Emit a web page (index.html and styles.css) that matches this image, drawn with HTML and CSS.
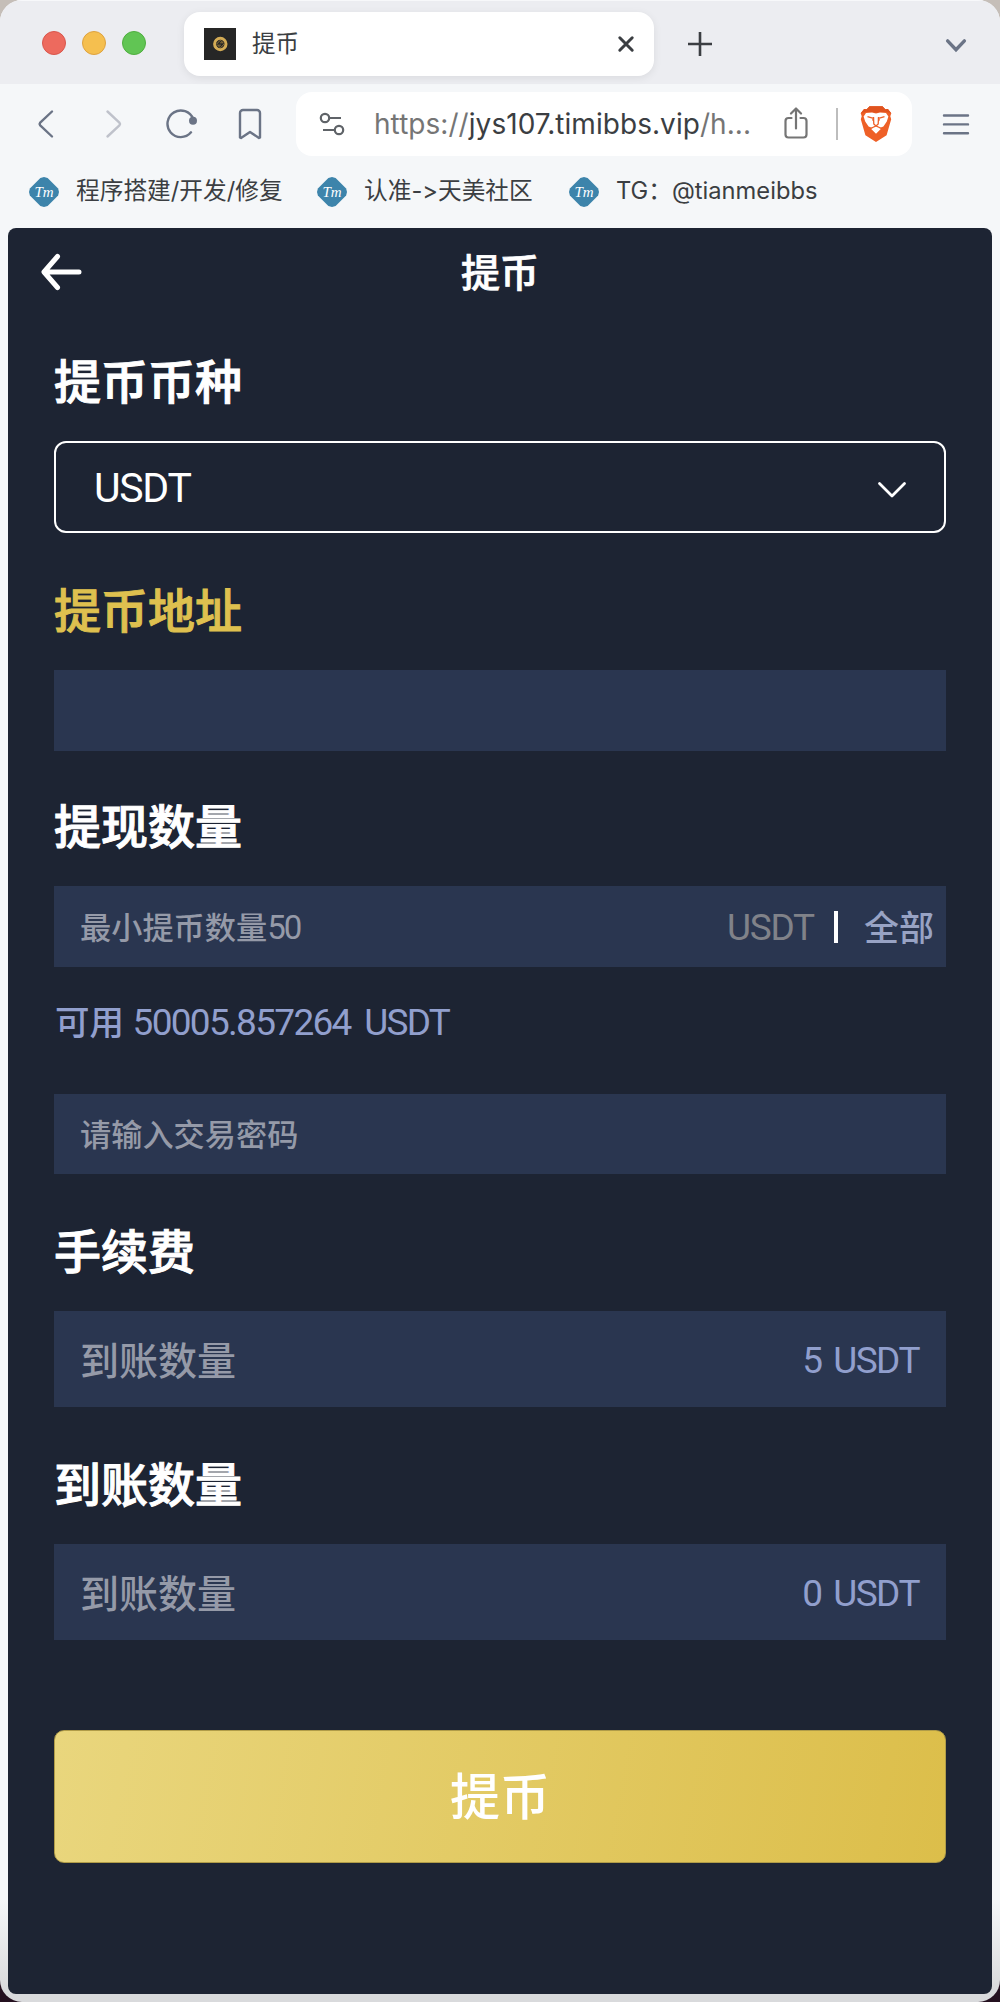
FILE: index.html
```html
<!doctype html>
<html lang="zh-CN">
<head>
<meta charset="utf-8">
<meta name="viewport" content="width=device-width, initial-scale=1">
<title>提币</title>
<link rel="stylesheet" href="styles.css">
</head>

<body>
<div class="window">
  <div class="tabstrip">
    <div class="lights">
      <span class="light red"></span>
      <span class="light yellow"></span>
      <span class="light green"></span>
    </div>
    <div class="tab">
      <svg class="favicon" width="32" height="32" viewBox="0 0 32 32">
        <rect width="32" height="32" fill="#262626"/>
        <circle cx="16.3" cy="16" r="5.7" fill="none" stroke="#d3ab55" stroke-width="3"/>
        <path d="M12.5 16.2l3.800-4 3 2.600h-3.200M20.300 15.800l-3.800 4-3-2.600h3.400" fill="none" stroke="#8a7038" stroke-width="1"/>
      </svg>
      <span class="tab-title">提币</span>
      <svg width="20" height="20" viewBox="0 0 20 20" fill="none" stroke="#3b3e42" stroke-width="3" stroke-linecap="round"><path d="M3.8 3.8l12.4 12.4M16.2 3.8L3.8 16.2"/></svg>
    </div>
    <svg class="new-tab" width="24" height="24" viewBox="0 0 24 24" fill="none" stroke="#3b3e42" stroke-width="2.6"><path d="M12 0v24M0 12h24"/></svg>
    <svg class="tab-menu" width="24" height="24" viewBox="0 0 24 24" fill="none" stroke="#6b7486" stroke-width="3.4" stroke-linecap="round"><path d="M3.6 7.900l8.4 8.8 8.4-8.8"/></svg>
  </div>

  <div class="toolbar">
    <div class="tool"><svg width="32" height="32" viewBox="0 0 32 32" fill="none" stroke="#6b7486" stroke-width="2.4" stroke-linecap="round" stroke-linejoin="round"><path d="M22 3.500L10.200 14.600q-1.200 1.400 0 2.8L22 28.500"/></svg></div>
    <div class="tool"><svg width="32" height="32" viewBox="0 0 32 32" fill="none" stroke="#bfc2cb" stroke-width="2.4" stroke-linecap="round" stroke-linejoin="round"><path d="M9.5 3.500l11.900 11.100q1.200 1.400 0 2.8L9.5 28.500"/></svg></div>
    <div class="tool"><svg width="32" height="32" viewBox="0 0 32 32" fill="none" stroke="#6b7486" stroke-width="2.4" stroke-linecap="round"><path d="M27.200 11A13.300 13.300 0 1 0 25 24.300"/><circle cx="27" cy="12.700" r="4" fill="#6b7486" stroke="none"/></svg></div>
    <div class="tool"><svg width="32" height="32" viewBox="0 0 32 32" fill="none" stroke="#6b7486" stroke-width="2.4" stroke-linejoin="round"><path d="M6 5a3 3 0 0 1 3-3h14a3 3 0 0 1 3 3v24.5L25 30l-9-6-9 6-1-.5z"/></svg></div>
    <div class="urlbar">
      <svg width="26" height="24" viewBox="0 0 26 24" fill="none" stroke="#5f6368" stroke-width="2.2"><circle cx="6" cy="6" r="4.2"/><path d="M10.2 6H22M4 18h11.600"/><circle cx="20" cy="18" r="4.200"/></svg>
      <span class="url">https://<b>jys107.timibbs.vip</b>/h...</span>
      <svg class="share" width="24" height="32" viewBox="0 0 24 32" fill="none" stroke="#757575" stroke-width="2.2" stroke-linecap="round" stroke-linejoin="round"><path d="M7.500 11H4.500a3 3 0 0 0-3 3v13.500a3 3 0 0 0 3 3h15a3 3 0 0 0 3-3V14a3 3 0 0 0-3-3h-3M12 21.500V2M7 6.500l5-5 5 5"/></svg>
      <span class="divider"></span>
      <svg class="shield" width="32" height="36" viewBox="0 0 32 36">
        <path d="M9.500.2h13l2.800 3 2.600-.2 3.400 4.300-1 3 .9 3-4.600 16L16 36 5.400 29.300.8 13.300l.9-3-1-3L4.100 3l2.600.2z" fill="#ee6027"/>
        <path d="M9.500.2h13l2.800 3 2.600-.2 3.400 4.300-5.500-1.600-5.200.8H11.400l-5.200-.8-5.500 1.600L4.100 3l2.600.2z" fill="#e0531f"/>
        <path d="M6 7l6-.6 4 1 4-1 6 .6 2.400 3.600-1.600 5-3.400 4.800-3.200 1.300L16 24l-4.200-2.300-3.200-1.300-3.400-4.800-1.600-5zM11 22.800l5-2.200 5 2.200-5 5z" fill="#fff"/>
        <path d="M7.500 10.700l6 1.700-1 2.200M24.500 10.700l-6 1.700 1 2.200M13.500 11l.3 7 2.200 2 2.200-2 .3-7M10.500 22.500L16 20l5.500 2.500" fill="none" stroke="#ee6027" stroke-width="1.300"/>
      </svg>
    </div>
    <svg class="menu" width="28" height="24" viewBox="0 0 28 24" fill="none" stroke="#6b7486" stroke-width="2.400" stroke-linecap="round"><path d="M2 3.500h24M2 12.400h24M2 21.300h24"/></svg>
  </div>

  <div class="bookmarks">
    <div class="bookmark"><span class="tm"><i>Tm</i></span><span>程序搭建/开发/修复</span></div>
    <div class="bookmark second"><span class="tm"><i>Tm</i></span><span>认准-&gt;天美社区</span></div>
    <div class="bookmark third"><span class="tm"><i>Tm</i></span><span>TG：@tianmeibbs</span></div>
  </div>

  <div class="page">
    <div class="header">
      <svg class="back" width="44" height="40" viewBox="0 0 44 40" fill="none" stroke="#fff" stroke-width="5" stroke-linecap="round" stroke-linejoin="round"><path d="M18.500 4.500L5 20l13.500 15.500M6 20h34"/></svg>
      <h1>提币</h1>
    </div>

    <div class="field">
      <div class="label">提币币种</div>
      <div class="select">
        <span>USDT</span>
        <svg width="30" height="18" viewBox="0 0 30 18" fill="none" stroke="#fff" stroke-width="2.800" stroke-linecap="round" stroke-linejoin="round"><path d="M2.500 2.500L15 15 27.500 2.500"/></svg>
      </div>
    </div>

    <div class="field address">
      <div class="label gold">提币地址</div>
      <div class="input"></div>
    </div>

    <div class="field amount">
      <div class="label">提现数量</div>
      <div class="input">
        <span class="placeholder">最小提币数量<span class="num">50</span></span>
        <span class="unit">USDT</span>
        <span class="bar"></span>
        <span class="all">全部</span>
      </div>
      <div class="available">可用 <span class="num">50005.857264 USDT</span></div>
    </div>

    <div class="field">
      <div class="input password"><span class="placeholder">请输入交易密码</span></div>
    </div>

    <div class="field">
      <div class="label">手续费</div>
      <div class="input tall"><span class="placeholder">到账数量</span><span class="value">5 USDT</span></div>
    </div>

    <div class="field">
      <div class="label">到账数量</div>
      <div class="input tall"><span class="placeholder">到账数量</span><span class="value">0 USDT</span></div>
    </div>

    <div class="submit">提币</div>
  </div>
</div>
</body>
</html>
```
FILE: styles.css
```css
* {
  box-sizing: border-box;
}

html, body {
  margin: 0;
  padding: 0;
}

body {
  width: 1000px;
  height: 2002px;
  overflow: hidden;
  background: linear-gradient(#c5beb8 0 50%, #24101f 50%);
  font-family: Roboto, "Noto Sans CJK SC", sans-serif;
}

svg {
  display: block;
  flex: none;
}

.window {
  height: 2002px;
  padding-bottom: 8px;
  display: flex;
  flex-direction: column;
  overflow: hidden;
  border-radius: 22px;
  background: linear-gradient(#f5f7f9 0 1900px, #d9dadc 1990px);
}

/* browser chrome */
.tabstrip {
  height: 84px;
  flex: none;
  display: flex;
  align-items: center;
  padding: 4px 32px 0 42px;
  background: #ecedf1;
  border-top: 1px solid #f7f8fa;
}

.lights {
  display: flex;
  gap: 16px;
  margin: -4px 38px 0 0;
}

.light {
  width: 24px;
  height: 24px;
  border-radius: 50%;
  border: 1px solid #d9564c;
  background: #ed6a5e;
}

.light.yellow {
  border-color: #dea23f;
  background: #f5bf4f;
}

.light.green {
  border-color: #4fae3f;
  background: #61c554;
}

.tab {
  width: 470px;
  height: 64px;
  margin-top: -1px;
  padding: 0 18px 0 20px;
  display: flex;
  align-items: center;
  border-radius: 16px;
  background: #fff;
  box-shadow: 0 2px 8px rgba(0, 0, 0, .08);
}

.tab-title {
  flex: 1;
  margin: -4px 0 0 16px;
  font-size: 23.500px;
  color: #3b3e42;
}

.new-tab {
  margin: -2px 0 0 34px;
}

.tab-menu {
  margin-left: auto;
}

.toolbar {
  height: 80px;
  flex: none;
  display: flex;
  align-items: center;
  padding-left: 12px;
}

.tool {
  width: 68px;
  display: flex;
  justify-content: center;
}

.urlbar {
  width: 616px;
  height: 64px;
  margin-left: 12px;
  padding: 0 20px 0 23px;
  display: flex;
  align-items: center;
  border-radius: 16px;
  background: #fff;
}

.url {
  width: 410px;
  margin-left: 29px;
  font-family: Inter, sans-serif;
  font-size: 28px;
  letter-spacing: .05px;
  white-space: nowrap;
  color: #757575;
}

.url b {
  font-weight: 400;
  color: #3b3e42;
}

.share {
  margin-top: -3px;
}

.divider {
  width: 2px;
  height: 32px;
  margin: 0 22px 0 28px;
  background: #bdbdbd;
}

.menu {
  margin: 0 auto;
}

.bookmarks {
  height: 64px;
  flex: none;
  display: flex;
  align-items: center;
  padding: 0 0 8px 29px;
}

.bookmark {
  width: 288px;
  display: flex;
  align-items: center;
  gap: 17px;
  font-family: Inter, "Noto Sans CJK SC", sans-serif;
  font-size: 23.700px;
  font-feature-settings: "calt" 0;
  line-height: 30px;
  white-space: nowrap;
  color: #3b3e42;
}

.bookmark span:last-child {
  margin-top: -3px;
}

.bookmark.second {
  width: 252px;
}

.tm {
  width: 30px;
  height: 30px;
  display: flex;
  align-items: center;
  justify-content: center;
  color: #fff;
  font: 15px "Liberation Serif", serif;
  background: #3d84ab;
  clip-path: polygon(50% 0, 62% 3%, 97% 38%, 100% 50%, 97% 62%, 62% 97%, 50% 100%, 38% 97%, 3% 62%, 0 50%, 3% 38%, 38% 3%);
}

/* withdraw page */
.page {
  flex: 1;
  margin: 0 8px;
  padding: 0 46px;
  border-radius: 8px;
  background: #1d2433;
  color: #fff;
}

.header {
  height: 124px;
  margin: 0 -46px;
  padding: 23px 31px 0;
  display: grid;
  grid-template-columns: 1fr auto 1fr;
  align-items: start;
}

.back {
  margin-top: 1px;
}

.header h1 {
  margin: 0;
  font-size: 39px;
  font-weight: 500;
  line-height: 46px;
  -webkit-text-stroke: .7px;
}

.field {
  margin-bottom: 48px;
}

.address {
  margin-bottom: 46px;
}

.label {
  height: 60px;
  margin-bottom: 29px;
  font-size: 47px;
  font-weight: 500;
  line-height: 61px;
  -webkit-text-stroke: 1px;
}

.gold {
  color: #dec04f;
}

.select {
  height: 92px;
  padding: 2px 37px 0 38px;
  display: flex;
  align-items: center;
  justify-content: space-between;
  border: 2px solid #fff;
  border-radius: 12px;
  font-size: 41px;
  letter-spacing: -1.300px;
}

.select svg {
  margin-top: 4px;
}

.input {
  height: 81px;
  padding: 0 27px 0 26px;
  display: flex;
  align-items: center;
  background: #2a3650;
}

.password {
  height: 80px;
}

.tall {
  height: 96px;
}

.placeholder {
  flex: 1;
  margin-top: -3px;
  font-size: 31.200px;
  font-weight: 500;
  color: #959aa8;
}

.tall .placeholder {
  font-size: 39px;
}

.num {
  font-weight: 400;
  letter-spacing: -1.900px;
  word-spacing: 6px;
}

.placeholder .num {
  font-size: 33px;
}

.amount {
  margin-bottom: 51px;
}

.amount .input {
  padding-right: 12px;
}

.unit {
  margin-top: 1px;
  font-size: 37px;
  letter-spacing: -1.200px;
  color: #808289;
}

.bar {
  width: 4px;
  height: 32px;
  margin: 0 26px 0 20px;
  background: #fff;
}

.all {
  margin-top: -2px;
  font-size: 35px;
  font-weight: 500;
  color: #98a3c4;
}

.available {
  height: 40px;
  margin-top: 36px;
  padding-left: 1px;
  font-size: 34.500px;
  font-weight: 500;
  line-height: 40px;
  color: #919fcd;
}

.available .num {
  font-size: 37px;
  letter-spacing: -1.700px;
}

.value {
  margin-top: 2px;
  font-size: 37px;
  letter-spacing: -1.500px;
  word-spacing: 4px;
  color: #919fcd;
}

.submit {
  height: 133px;
  margin-top: 90px;
  padding-bottom: 7px;
  display: flex;
  align-items: center;
  justify-content: center;
  border: 1px solid #b09c48;
  border-radius: 10px;
  background: linear-gradient(100deg, #e9d67d, #dcbe4a);
  font-size: 50px;
  font-weight: 500;
}
```
